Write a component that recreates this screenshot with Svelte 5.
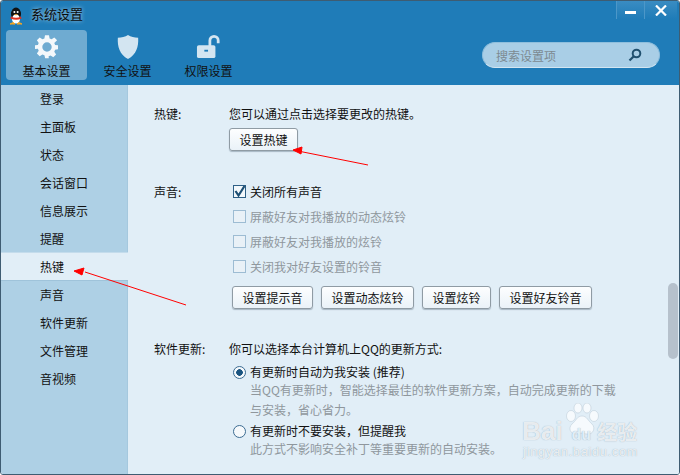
<script>
  const tabs = [
    { id: 'gear', label: '基本设置', active: true },
    { id: 'shield', label: '安全设置' },
    { id: 'lock', label: '权限设置' }
  ];
  const menu = ['登录', '主面板', '状态', '会话窗口', '信息展示', '提醒', '热键', '声音', '软件更新', '文件管理', '音视频'];
  const mutes = ['屏蔽好友对我播放的动态炫铃', '屏蔽好友对我播放的炫铃', '关闭我对好友设置的铃音'];
  const soundButtons = ['设置提示音', '设置动态炫铃', '设置炫铃', '设置好友铃音'];
</script>

<div class="window">
  <header>
    <div class="titlebar">
      <svg class="penguin" width="16" height="18" viewBox="0 0 16 18">
        <ellipse cx="8" cy="7" rx="5" ry="6.5" fill="#111" />
        <ellipse cx="8" cy="12" rx="4" ry="4.5" fill="#fff" />
        <path d="M3 9.5q5 2.5 10 0l.5 2q-5 2.5-11 0z" fill="#e0301e" />
        <path d="M5 15.5l-3 1.5h5zM11 15.5l3 1.5H9z" fill="#f5a623" stroke="#f5a623" />
        <circle cx="6.4" cy="5" r="1" fill="#fff" />
        <circle cx="9.6" cy="5" r="1" fill="#fff" />
        <path d="M6 7.2h4l-2 1.4z" fill="#f5a623" />
      </svg>
      <span class="title">系统设置</span>
      <div class="controls">
        <button aria-label="最小化"><i class="min"></i></button>
        <button aria-label="关闭">
          <svg width="12" height="11" viewBox="0 0 12 11"><path d="M1 .5l10 10M11 .5l-10 10" stroke="#fff" stroke-width="2.2" /></svg>
        </button>
      </div>
    </div>
    <div class="toolbar">
      <nav>
        {#each tabs as tab}
          <div class="tab {tab.active ? 'active' : ''}">
            {#if tab.id === 'gear'}
              <svg width="24" height="24" viewBox="0 0 24 24">
                <path fill="#f4f8fb" fill-rule="evenodd" d="M10 1h4l.6 3.2 2 .8 2.700-1.800 2.800 2.800L19.300 8.700l.8 2L23 11v4l-2.900.4-.8 2 1.800 2.700-2.800 2.800-2.700-1.800-2 .8L13.800 24h-3.600l-.8-3.100-2-.8-2.700 1.800-2.800-2.800 1.800-2.700-.8-2L0 14.600V11l2.900-.4.800-2L1.900 6l2.800-2.800L7.400 5l2-.8zM12 8a4.700 4.700 0 1 0 0 9.400A4.700 4.700 0 0 0 12 8z" transform="translate(0 -.7)" />
              </svg>
            {:else if tab.id === 'shield'}
              <svg width="24" height="24" viewBox="0 0 24 26">
                <path fill="#d3e5f1" d="M12 0c3 2 7 3 11 3 .6 10-2 18-11 23C3 21 .4 13 1 3c4 0 8-1 11-3z" />
              </svg>
            {:else}
              <svg width="27" height="24" viewBox="0 0 27 26">
                <path fill="none" stroke="#d3e5f1" stroke-width="3" d="M15 12V6a4.500 4.500 0 0 1 9 0v3" />
                <rect x="1" y="11" width="20" height="14" rx="2" fill="#d3e5f1" />
                <rect x="9" y="16" width="4" height="2" fill="#1f7cb8" />
              </svg>
            {/if}
            <span>{tab.label}</span>
          </div>
        {/each}
      </nav>
      <div class="search">
        <span>搜索设置项</span>
        <svg width="14" height="14" viewBox="0 0 14 14">
          <circle cx="8.500" cy="5.500" r="3.800" fill="none" stroke="#20506f" stroke-width="2" />
          <path d="M5.800 8.200L1.500 12.500" stroke="#20506f" stroke-width="2.200" />
        </svg>
      </div>
    </div>
  </header>

  <div class="body">
    <aside>
      {#each menu as item}
        <div class="item {item === '热键' ? 'current' : ''}">{item}</div>
      {/each}
    </aside>

    <main>
      <section class="hotkey">
        <div class="label">热键:</div>
        <div class="fields">
          <p>您可以通过点击选择要更改的热键。</p>
          <button class="btn">设置热键</button>
        </div>
      </section>

      <section class="sound">
        <div class="label">声音:</div>
        <div class="fields">
          <label class="check"><i class="box on">
            <svg width="13" height="13" viewBox="0 0 13 13"><path d="M2.500 6l3 4.500L11.500 1" fill="none" stroke="#1d4f74" stroke-width="2.200" /></svg>
          </i>关闭所有声音</label>
          {#each mutes as m}
            <label class="check off"><i class="box"></i>{m}</label>
          {/each}
          <div class="btns">
            {#each soundButtons as b}
              <button class="btn">{b}</button>
            {/each}
          </div>
        </div>
      </section>

      <section class="update">
        <div class="label">软件更新:</div>
        <div class="fields">
          <p>你可以选择本台计算机上QQ的更新方式:</p>
          <label class="radio"><i class="dot on"></i>有更新时自动为我安装 (推荐)</label>
          <p class="hint">当QQ有更新时，智能选择最佳的软件更新方案，自动完成更新的下载<br />与安装，省心省力。</p>
          <label class="radio second"><i class="dot"></i>有更新时不要安装，但提醒我</label>
          <p class="hint last">此方式不影响安全补丁等重要更新的自动安装。</p>
        </div>
      </section>

      <div class="scrollbar"></div>
    </main>
  </div>

  <!-- annotations painted over the screenshot -->
  <svg class="arrows" width="680" height="475" viewBox="0 0 680 475">
    <path d="M368 165L298 151M186 305L85 272" stroke="#f00" stroke-width="1" fill="none" />
    <path d="M293 150l9-3-1 7zM74 271l10-3-2 7z" fill="#f00" stroke="#f00" />
  </svg>
  <div class="mark">
    <svg class="paw" width="36" height="34" viewBox="0 0 36 34">
      <g fill="#fff" fill-opacity="0.7" stroke="#b9c9d4" stroke-width="0.5">
        <ellipse cx="7" cy="13" rx="4.500" ry="5.500" />
        <ellipse cx="14" cy="5" rx="4" ry="5" />
        <ellipse cx="23" cy="5" rx="4" ry="5" />
        <ellipse cx="30" cy="13" rx="4.500" ry="5.500" />
        <path d="M18 13c5 0 6 5 10 8 4 4 1 11-5 10-3 0-3-1-5-1s-3 1-6 1c-6 0-8-6-4-10 4-3 5-8 10-8z" />
      </g>
    </svg>
    <div class="brand"><span class="bai">Bai</span><span class="du">du</span><span class="jy">经验</span></div>
    <div class="site">jingyan.baidu.com</div>
  </div>
</div>

<style>
  :global(body) {
    margin: 0;
  }

  .window {
    position: relative;
    width: 680px;
    height: 475px;
    box-sizing: border-box;
    border: 1px solid #3e5c72;
    border-radius: 3px;
    display: flex;
    flex-direction: column;
    overflow: hidden;
    font-family: "Noto Sans CJK SC", "Liberation Sans", sans-serif;
    font-size: 12px;
    color: #111;
  }

  header {
    height: 84px;
    flex: none;
    background: #1f7cb8;
  }

  .titlebar {
    height: 29px;
    display: flex;
    align-items: flex-start;
    padding-left: 7px;
  }

  .penguin {
    margin-top: 6px;
  }

  .title {
    margin: 3px 0 0 7px;
    font-size: 13px;
    line-height: 19px;
    color: #0a0a0a;
    text-shadow: 0 0 4px rgba(255, 255, 255, 0.75);
  }

  .controls {
    margin-left: auto;
    margin-right: 2px;
    display: flex;
  }

  .controls button {
    width: 28px;
    height: 18px;
    padding: 0;
    border: 0;
    border-left: 1px solid #4c97c8;
    background: linear-gradient(#3a8cc2, #1f7cb8);
    display: flex;
    align-items: center;
    justify-content: center;
  }

  .controls button + button {
    width: 33px;
  }

  .min {
    display: block;
    width: 11px;
    height: 3px;
    margin-top: 5px;
    background: #fff;
  }

  .toolbar {
    display: flex;
    align-items: flex-start;
    justify-content: space-between;
    padding: 0 19px 0 5px;
  }

  nav {
    display: flex;
  }

  .tab {
    width: 81px;
    height: 50px;
    box-sizing: border-box;
    border-radius: 4px;
    display: flex;
    flex-direction: column;
    align-items: center;
    justify-content: flex-end;
    gap: 3px;
  }

  .tab span {
    line-height: 17px;
    margin-bottom: 1px;
  }

  .tab.active {
    background: rgba(255, 255, 255, 0.36);
  }

  .search {
    width: 178px;
    height: 26px;
    margin-top: 12px;
    box-sizing: border-box;
    border: 1px solid #8fbfdd;
    border-bottom-color: #d3e6f2;
    border-radius: 13px;
    background: #a9cee6;
    display: flex;
    align-items: center;
    justify-content: space-between;
    padding: 0 17px 0 13px;
    color: #7d8a91;
  }

  .body {
    flex: 1;
    display: flex;
    min-height: 0;
  }

  aside {
    width: 126px;
    flex: none;
    background: #aed0e5;
    border-right: 1px solid #a5c8de;
  }

  .item {
    height: 28px;
    line-height: 28px;
    padding-left: 39px;
  }

  .item.current {
    background: #e1eef7;
    height: 27px;
    margin-bottom: 1px;
    box-shadow: 0 1px 0 #9fc3da, 0 -1px 0 #c4dcec;
    margin-right: -1px;
    position: relative;
  }

  main {
    position: relative;
    flex: 1;
    background: #e1eef7;
    padding: 20px 0 0 26px;
  }

  section {
    display: grid;
    grid-template-columns: 75px 1fr;
  }

  .label,
  p,
  .check,
  .radio {
    line-height: 18px;
    margin: 0;
  }

  .hotkey .fields {
    display: flex;
    flex-direction: column;
    align-items: flex-start;
    gap: 5px;
  }

  .btn {
    height: 23px;
    padding: 0;
    font: inherit;
    color: #111;
    line-height: 20px;
    border: 1px solid #8f9ba4;
    border-radius: 3px;
    background: linear-gradient(#fdfeff, #eaf2f8);
    box-shadow: 0 1px 1px rgba(60, 80, 100, 0.35);
  }

  .hotkey .btn {
    width: 69px;
  }

  .sound {
    margin-top: 32px;
  }

  .sound .fields {
    display: flex;
    flex-direction: column;
    align-items: flex-start;
    margin-top: -4px;
  }

  .check {
    display: flex;
    align-items: center;
    height: 25px;
    margin-left: 4px;
    gap: 4px;
  }

  .check.off {
    color: #8f979d;
  }

  .box {
    display: block;
    width: 13px;
    height: 13px;
    box-sizing: border-box;
    border: 1px solid #9dbcd3;
    background: #e9f1f7;
    position: relative;
  }

  .box.on {
    border-color: #2d5f86;
    background: #f3f8fb;
  }

  .box svg {
    position: absolute;
    left: -1px;
    top: -1px;
  }

  .btns {
    display: flex;
    gap: 8px;
    margin: 7px 0 0 3px;
  }

  .btns .btn:nth-child(1) { width: 81px; }
  .btns .btn:nth-child(2) { width: 93px; }
  .btns .btn:nth-child(3) { width: 69px; }
  .btns .btn:nth-child(4) { width: 93px; }

  .update {
    margin-top: 31px;
  }

  .radio {
    display: flex;
    align-items: center;
    gap: 4px;
    margin: 5px 0 0 4px;
  }

  .radio.second {
    margin-top: 2px;
  }

  .dot {
    display: block;
    width: 13px;
    height: 13px;
    box-sizing: border-box;
    border: 1px solid #3c6c92;
    border-radius: 50%;
    background: #f5f9fc;
  }

  .dot.on {
    background: radial-gradient(circle, #1a5480 0 3px, #f5f9fc 3.6px);
  }

  .hint {
    margin-left: 21px;
    margin-top: -1px;
    color: #8f979d;
    line-height: 20px;
    width: 380px;
  }

  .scrollbar {
    position: absolute;
    right: 1px;
    top: 198px;
    width: 10px;
    height: 76px;
    border-radius: 5px;
    background: #b6c1cc;
  }

  .arrows {
    position: absolute;
    left: -1px;
    top: -1px;
    pointer-events: none;
  }

  .mark {
    position: absolute;
    left: 521px;
    top: 402px;
    width: 124px;
    height: 58px;
    color: rgba(255, 255, 255, 0.8);
    font-family: "Liberation Sans", "Noto Sans CJK SC", sans-serif;
    text-shadow: 0 0 1px rgba(110, 135, 155, 0.7);
    pointer-events: none;
  }

  .paw {
    position: absolute;
    left: 42px;
    top: 0;
  }

  .brand {
    position: absolute;
    left: 0;
    top: 13px;
    display: flex;
    align-items: baseline;
    line-height: 30px;
    font-weight: 700;
    white-space: nowrap;
  }

  .bai {
    font-size: 26px;
  }

  .du {
    font-size: 16px;
    margin-left: 9px;
    color: #e1eef7;
  }

  .jy {
    font-size: 20px;
    margin-left: 6px;
  }

  .site {
    position: absolute;
    left: 1px;
    top: 41px;
    font-size: 13px;
    line-height: 16px;
    letter-spacing: 0.6px;
  }
</style>
